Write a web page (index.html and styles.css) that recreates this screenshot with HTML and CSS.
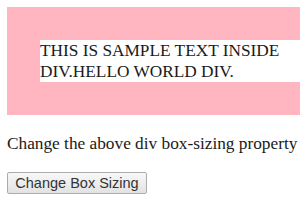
FILE: index.html
```html
<!DOCTYPE html>
<html lang="en">
<head>
  <meta charset="UTF-8">
  <title>Box Sizing</title>
  <link rel="stylesheet" href="styles.css">
</head>
<body>
  <div class="box" id="box">
    <div class="inner">THIS IS SAMPLE TEXT INSIDE DIV.HELLO WORLD DIV.</div>
  </div>
  <p class="note">Change the above div box-sizing property</p>
  <button class="btn" id="toggle">Change Box Sizing</button>
</body>
</html>
```
FILE: styles.css
```css
body {
  margin: 7px 0 7px 7px;
  background-color: #fff;
  color: #1a1a1a;
  font-family: "Liberation Serif", "Times New Roman", serif;
  font-size: 17.3px;
  line-height: 21px;
}
.box {
  padding: 33px 0 33px 33px;
  background-color: #ffb6c1;
}
.inner {
  background-color: #fff;
}
.note {
  margin: 18px 0;
  white-space: nowrap;
}
.btn {
  width: 140px;
  height: 22px;
  padding: 0 6px;
  font-family: "Liberation Sans", Arial, sans-serif;
  font-size: 14.5px;
  color: #333;
  background: linear-gradient(#f8f8f8, #e2e2e2);
  border: 1px solid #acacac;
  border-radius: 2px;
}
```
